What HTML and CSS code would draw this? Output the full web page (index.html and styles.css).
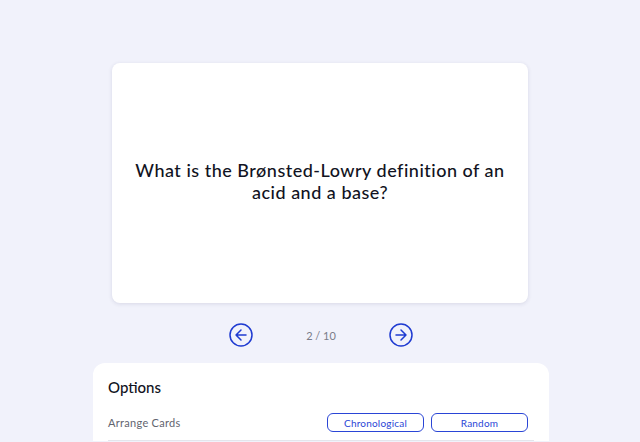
FILE: index.html
```html
<!DOCTYPE html>
<html lang="en">
<head>
<meta charset="utf-8">
<title>Flashcards</title>
<link rel="stylesheet" href="styles.css">
</head>
<body>
<main class="page">
  <section class="card">
    <p class="question">What is the Brønsted-Lowry definition of an acid and a base?</p>
  </section>
  <nav class="pager">
    <button class="nav-btn" aria-label="Previous">
      <svg viewBox="0 0 24 24" width="24" height="24" fill="none" stroke="currentColor" stroke-width="1.5" stroke-linecap="round" stroke-linejoin="round"><circle cx="12" cy="12" r="11"/><path d="M12 7l-5 5 5 5M7 12h10"/></svg>
    </button>
    <span class="count">2 / 10</span>
    <button class="nav-btn" aria-label="Next">
      <svg viewBox="0 0 24 24" width="24" height="24" fill="none" stroke="currentColor" stroke-width="1.5" stroke-linecap="round" stroke-linejoin="round"><circle cx="12" cy="12" r="11"/><path d="M12 7l5 5-5 5M7 12h10"/></svg>
    </button>
  </nav>
  <section class="options">
    <h2 class="options-title">Options</h2>
    <div class="option-row">
      <span class="option-label">Arrange Cards</span>
      <div class="option-buttons">
        <button class="pill">Chronological</button>
        <button class="pill">Random</button>
      </div>
    </div>
  </section>
</main>
</body>
</html>
```
FILE: styles.css
```css
* { box-sizing: border-box; }
html, body { margin: 0; padding: 0; }
body {
  background: #f1f2fb;
  font-family: "Lato", "Open Sans", sans-serif;
  color: #111322;
  height: 442px;
  overflow: hidden;
}
.page {
  display: flex;
  flex-direction: column;
  align-items: center;
  padding-top: 63px;
}
.card {
  width: 416px;
  height: 240px;
  background: #fff;
  border-radius: 8px;
  box-shadow: 0 1px 4px rgba(30, 35, 80, 0.12);
  display: flex;
  align-items: center;
  justify-content: center;
  padding: 0 0 4px;
}
.question {
  margin: 0;
  max-width: 385px;
  text-align: center;
  font-size: 18px;
  line-height: 22px;
  font-weight: 500;
  letter-spacing: 0.5px;
}
.pager {
  width: 184px;
  margin-top: 20px;
  display: flex;
  justify-content: space-between;
  align-items: center;
  margin-left: 2px;
}
.nav-btn {
  width: 24px;
  height: 24px;
  padding: 0;
  border: 0;
  background: none;
  color: #1f3bd1;
  display: flex;
}
.count {
  font-size: 11px;
  color: #7a7c89;
}
.options {
  width: 456px;
  margin-top: 16px;
  margin-left: 2px;
  background: #fff;
  border-radius: 12px 12px 0 0;
  padding: 14px 15px 0;
}
.options-title {
  margin: 0;
  font-size: 15px;
  font-weight: 500;
  line-height: 20px;
  color: #111322;
}
.option-row {
  display: flex;
  justify-content: space-between;
  align-items: center;
  margin-top: 16px;
  padding-bottom: 8px;
  border-bottom: 1px solid #e4e5ec;
  padding-right: 6px;
}
.option-label {
  font-size: 11px;
  color: #62646f;
  letter-spacing: 0.3px;
}
.option-buttons {
  display: flex;
  gap: 7px;
}
.pill {
  width: 97px;
  height: 19px;
  border: 1px solid #2a45d6;
  border-radius: 6px;
  background: #fff;
  color: #2a45d6;
  font-family: inherit;
  font-size: 10px;
  padding: 0;
  letter-spacing: 0.2px;
}
```
